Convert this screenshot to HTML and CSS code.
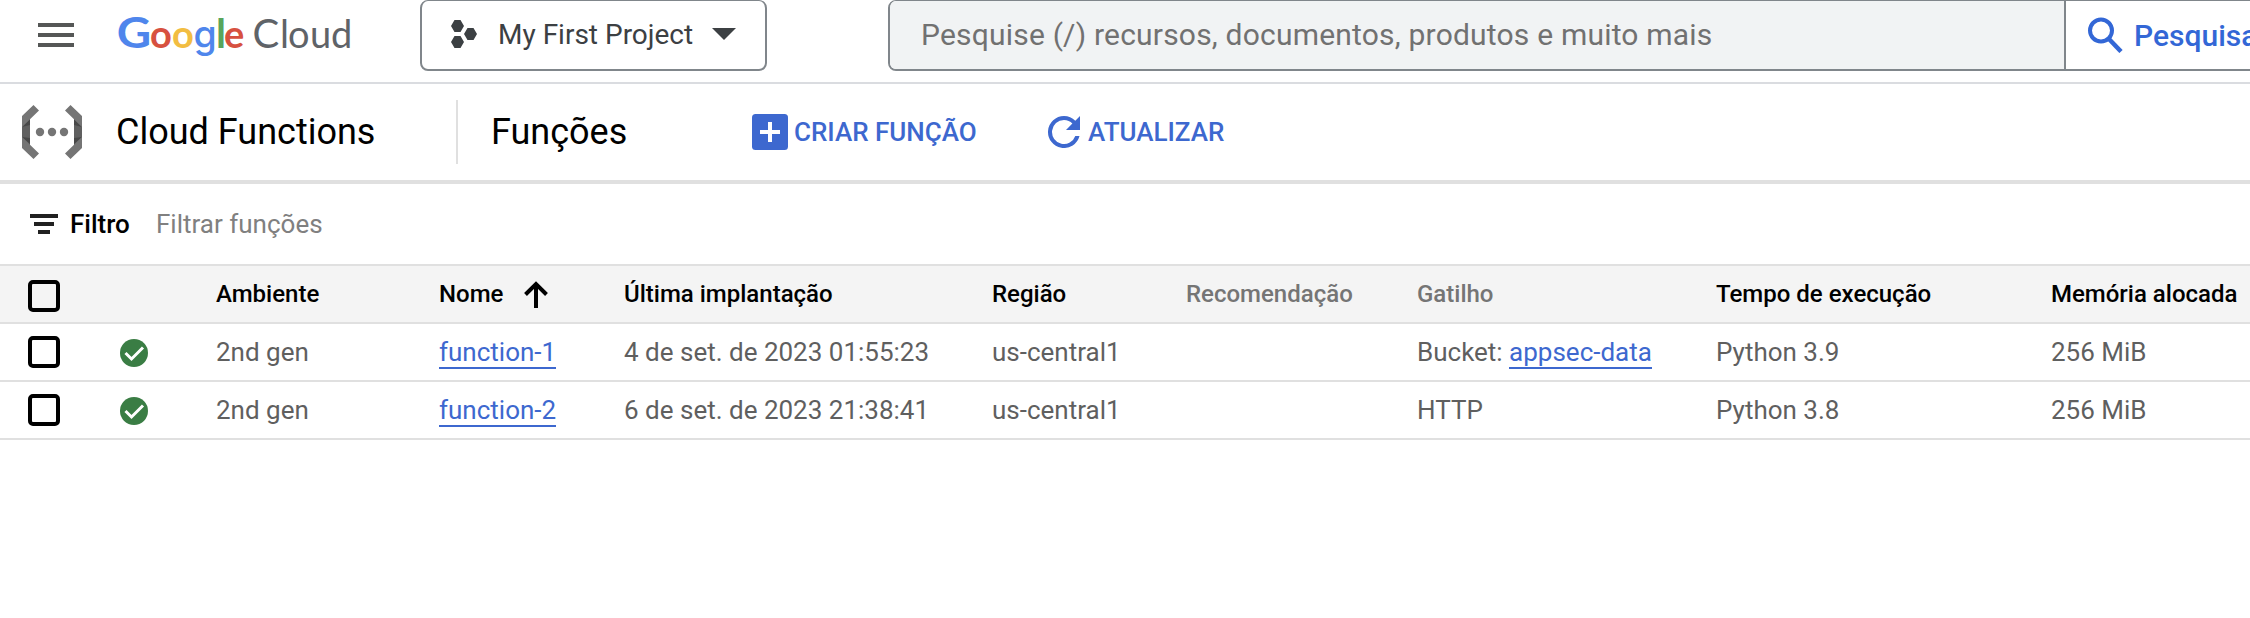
FILE: index.html
```html
<!DOCTYPE html>
<html lang="pt-BR">
<head>
<meta charset="utf-8">
<title>Cloud Functions</title>
<link rel="stylesheet" href="styles.css">
</head>
<body>
<header class="topbar">
  <svg class="menu" width="36" height="24" viewBox="0 0 36 24"><path d="M0 0h36v4H0zM0 10h36v4H0zM0 20h36v4H0z" fill="#555756"/></svg>
  <svg class="logo" width="240" height="70" viewBox="0 0 240 70">
    <g class="logo-google">
      <text transform="translate(.8 47.500) scale(1.13 1)" font-size="42" fill="#4f86ec">G</text>
      <text x="34" y="47.500" font-size="38" fill="#d75140">o</text>
      <text x="56" y="47.500" font-size="38" fill="#f2bd42">o</text>
      <text class="logo-g" x="77.500" y="48" font-size="37.500" fill="#4f86ec">g</text>
      <text x="100" y="47.500" font-size="40" fill="#58a55c">l</text>
      <text x="108" y="47.500" font-size="38" fill="#d75140">e</text>
    </g>
    <g class="logo-cloud" fill="#5f6368">
      <text x="136.500" y="47.500" font-size="40">C</text>
      <text x="164" y="47.500" font-size="38">l</text>
      <text x="172" y="47.500" font-size="38">o</text>
      <text x="194" y="47.500" font-size="38">u</text>
      <text x="215" y="47.500" font-size="38">d</text>
    </g>
  </svg>
  <button class="project">
    <svg width="26" height="28" viewBox="0 0 26 28" fill="#3c4043"><path d="M3.500 0h6L13 6l-3.500 6h-6L0 6zM3.500 16h6l3.500 6-3.500 6h-6L0 22zM16.500 8h6L26 14l-3.500 6h-6L13 14z"/></svg>
    <span class="project-name">My First Project</span>
    <svg width="24" height="12" viewBox="0 0 24 12"><path d="M0 0h24L12 12z" fill="#3c4043"/></svg>
  </button>
  <div class="search">
    <div class="search-field">Pesquise (/) recursos, documentos, produtos e muito mais</div>
    <div class="search-button">
      <svg width="35" height="36" viewBox="0 0 35 36" fill="none" stroke="#3367d6" stroke-width="4"><circle cx="13" cy="13.500" r="11"/><path d="M20.500 21.500L33 34.500" stroke-width="4.500"/></svg>
      <span>Pesquisar</span>
    </div>
  </div>
</header>
<div class="actionbar">
  <svg class="product" width="60" height="54" viewBox="0 0 60 54">
    <path d="M0 11h8v32H0zM52 11h8v32h-8z" fill="#606060"/>
    <path d="M0 22L8 14v6zM0 32l8 7v-6zM60 22l-8-8v6zM60 32l-8 7v-6z" fill="#484848"/>
    <path d="M11.500 0L17 5.500 0 22V11zM0 32l17 16.500-5.500 5.500L0 43zM48.500 0L43 5.500 60 22V11zM60 32L43 48.500l5.500 5.500L60 43z" fill="#757575"/>
    <g fill="#757575"><circle cx="18" cy="27" r="4.200"/><circle cx="30" cy="27" r="4.200"/><circle cx="42" cy="27" r="4.200"/></g>
  </svg>
  <span class="product-name">Cloud Functions</span>
  <span class="divider"></span>
  <h1 class="title">Funções</h1>
  <a class="action create">
    <svg width="36" height="36" viewBox="0 0 36 36"><rect width="36" height="36" rx="3.500" fill="#3d68cf"/><path d="M8 18h20M18 8v20" stroke="#fff" stroke-width="4"/></svg>
    <span>CRIAR FUNÇÃO</span>
  </a>
  <a class="action refresh">
    <svg width="32" height="32" viewBox="0 0 32 32"><path d="M27.300 4.700A15.900 15.900 0 0 0 16 0a16 16 0 1 0 15.500 20h-4.200A12 12 0 1 1 16 4c3.300 0 6.300 1.400 8.400 3.600L18 14h14V0z" fill="#3d68cf"/></svg>
    <span>ATUALIZAR</span>
  </a>
</div>
<div class="filter">
  <svg width="28" height="20" viewBox="0 0 28 20"><path d="M0 0h28v4H0zM4 8h20v4H4zM8 16h12v4H8z" fill="#212121"/></svg>
  <span class="filter-label">Filtro</span>
  <span class="filter-hint">Filtrar funções</span>
</div>
<div class="table">
  <div class="row head">
    <span class="box"></span><span></span>
    <span>Ambiente</span>
    <span class="sorted">Nome <svg width="24" height="27" viewBox="0 0 24 27" fill="none" stroke="#000" stroke-width="4"><path d="M12 27V3M1.500 13.500L12 3l10.500 10.500"/></svg></span>
    <span>Última implantação</span>
    <span>Região</span>
    <span class="muted">Recomendação</span>
    <span class="muted">Gatilho</span>
    <span>Tempo de execução</span>
    <span>Memória alocada</span>
  </div>
  <div class="row">
    <span class="box"></span>
    <svg class="ok" width="28" height="28" viewBox="0 0 28 28"><circle cx="14" cy="14" r="14" fill="#3a7d44"/><path d="M5.500 14l6 6L23 8.500" fill="none" stroke="#fff" stroke-width="3"/></svg>
    <span>2nd gen</span>
    <span><a class="link">function-1</a></span>
    <span>4 de set. de 2023 01:55:23</span>
    <span>us-central1</span>
    <span></span>
    <span>Bucket: <a class="link">appsec-data</a></span>
    <span>Python 3.9</span>
    <span>256 MiB</span>
  </div>
  <div class="row">
    <span class="box"></span>
    <svg class="ok" width="28" height="28" viewBox="0 0 28 28"><circle cx="14" cy="14" r="14" fill="#3a7d44"/><path d="M5.500 14l6 6L23 8.500" fill="none" stroke="#fff" stroke-width="3"/></svg>
    <span>2nd gen</span>
    <span><a class="link">function-2</a></span>
    <span>6 de set. de 2023 21:38:41</span>
    <span>us-central1</span>
    <span></span>
    <span>HTTP</span>
    <span>Python 3.8</span>
    <span>256 MiB</span>
  </div>
</div>
</body>
</html>
```
FILE: styles.css
```css
* { box-sizing: border-box; }
body {
  margin: 0;
  height: 618px;
  overflow: hidden;
  background: #fff;
  font-family: Roboto, sans-serif;
  font-size: 26px;
  color: #000;
  white-space: nowrap;
}
svg { display: block; flex: none; }
.topbar {
  display: flex;
  align-items: flex-start;
  height: 84px;
  border-bottom: 2px solid #dadce0;
  overflow: hidden;
}
.menu { margin: 23px 0 0 38px; }
.logo { margin-left: 42px; font-family: Lato, sans-serif; }
.logo-google { font-weight: 700; }
.logo-g { font-family: Inter, sans-serif; font-weight: 500; }
.logo-cloud { font-weight: 400; }
.project {
  flex: none;
  display: flex;
  align-items: center;
  width: 347px;
  height: 71px;
  margin: 0 0 0 64px;
  padding: 0 29px 2px;
  border: 2px solid #80868b;
  border-top-width: 1px;
  border-radius: 8px;
  background: #fff;
  font: 400 28px Roboto, sans-serif;
  color: #3c4043;
}
.project-name { width: 215px; margin-left: 21px; text-align: left; }
.search {
  flex: none;
  display: flex;
  width: 1500px;
  height: 71px;
  margin-left: 121px;
  border: 2px solid #80868b;
  border-top-width: 1px;
  border-radius: 8px;
  overflow: hidden;
}
.search-field {
  width: 1174px;
  padding-left: 31px;
  line-height: 67px;
  background: #f1f3f4;
  font-size: 30px;
  letter-spacing: 0.2px;
  color: #717171;
}
.search-button {
  display: flex;
  align-items: center;
  flex: 1;
  gap: 11px;
  padding-left: 22px;
  border-left: 2px solid #80868b;
  font-size: 30px;
  font-weight: 500;
  color: #3367d6;
}
.actionbar {
  display: flex;
  align-items: center;
  height: 100px;
  padding-left: 22px;
  border-bottom: 4px solid #e0e0e0;
}
.product-name, .title { margin: 0; font-size: 36px; font-weight: 400; }
.product-name { width: 340px; margin-left: 34px; }
.divider { width: 2px; height: 64px; background: #e0e0e0; }
.title { width: 294px; padding-left: 33px; }
.action { display: flex; align-items: center; font-weight: 500; color: #3d68cf; }
.create { width: 296px; gap: 6px; }
.refresh { gap: 8px; }
.filter {
  display: flex;
  align-items: center;
  height: 80px;
  padding-left: 30px;
}
.filter-label { width: 86px; margin-left: 12px; font-weight: 500; }
.filter-hint { color: #808080; }
.row {
  display: grid;
  grid-template-columns: 92px 96px 223px 185px 368px 194px 231px 299px 335px 200px;
  align-items: center;
  height: 58px;
  padding-left: 28px;
  border-bottom: 2px solid #e0e0e0;
  color: #5f5f5f;
}
.head {
  height: 60px;
  border-top: 2px solid #e0e0e0;
  background: #f4f4f4;
  font-size: 24px;
  font-weight: 500;
  color: #000;
}
.muted { color: #757575; }
.sorted { display: flex; align-items: center; gap: 21px; }
.box { width: 32px; height: 32px; border: 4px solid #000; border-radius: 5px; }
.head .box { margin-top: 4px; }
.ok { margin-top: 2px; }
.link { color: #3d68cf; border-bottom: 2px solid #3d68cf; }
```
